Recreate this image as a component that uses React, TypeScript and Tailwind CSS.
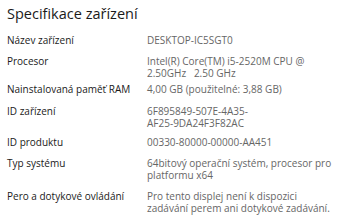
import React from "react";

const rows: { label: string; value: string; mt: string }[] = [
  { label: "Název zařízení", value: "DESKTOP-IC5SGT0", mt: "mt-0" },
  { label: "Procesor", value: "Intel(R) Core(TM) i5-2520M CPU @\n2.50GHz   2.50 GHz", mt: "mt-[9px]" },
  { label: "Nainstalovaná paměť RAM", value: "4,00 GB (použitelné: 3,88 GB)", mt: "mt-[4px]" },
  { label: "ID zařízení", value: "6F895849-507E-4A35-\nAF25-9DA24F3F82AC", mt: "mt-[10px]" },
  { label: "ID produktu", value: "00330-80000-00000-AA451", mt: "mt-[7px]" },
  { label: "Typ systému", value: "64bitový operační systém, procesor pro\nplatformu x64", mt: "mt-[9px]" },
  { label: "Pero a dotykové ovládání", value: "Pro tento displej není k dispozici\nzadávání perem ani dotykové zadávání.", mt: "mt-[9px]" },
];

export default function App() {
  return (
    <div className="w-[340px] h-[221px] bg-white overflow-hidden pl-[7px] pt-[4px]" style={{ fontFamily: "'Open Sans', 'Noto Sans', sans-serif" }}>
      <div className="text-[14.5px] leading-[20px] text-[#1a1a1a]">Specifikace zařízení</div>
      <div className="mt-[10px] text-[10px] leading-[12px]">
        {rows.map((r) => (
          <div key={r.label} className={`flex ${r.mt}`}>
            <div className="w-[140px] shrink-0 text-[#1a1a1a]">{r.label}</div>
            <div className="text-[#666666] whitespace-pre">{r.value}</div>
          </div>
        ))}
      </div>
    </div>
  );
}
